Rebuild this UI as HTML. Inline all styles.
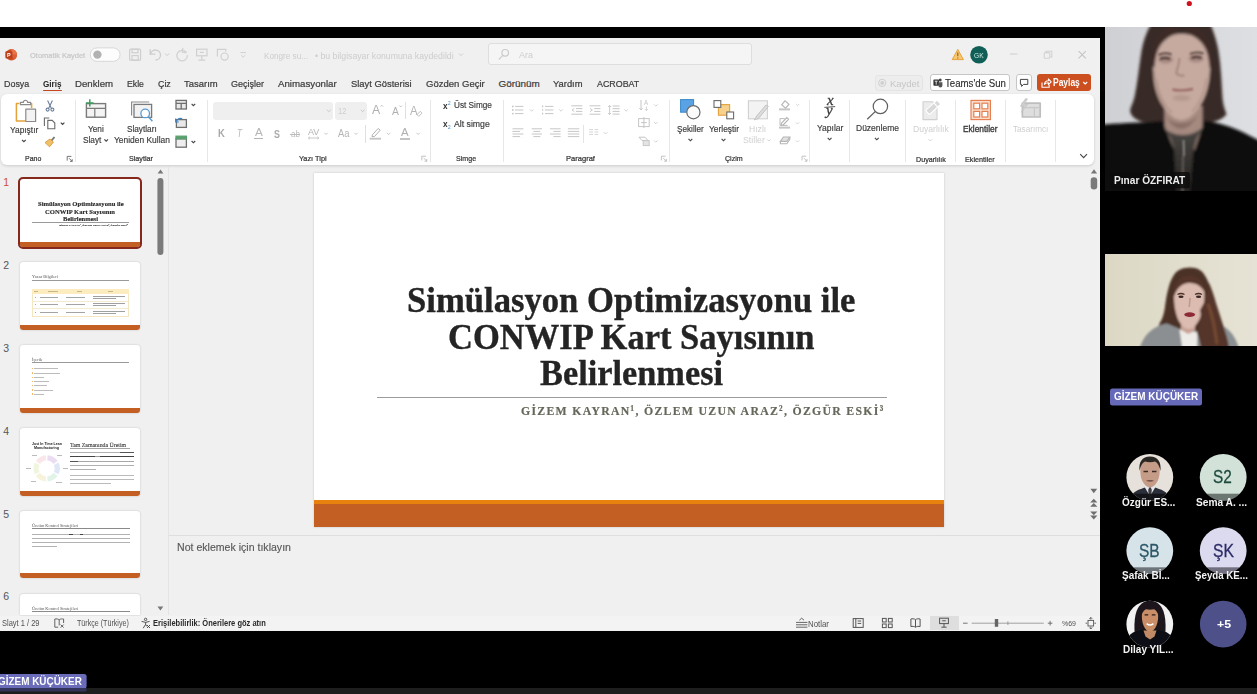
<!DOCTYPE html>
<html lang="tr"><head><meta charset="utf-8"><title>Sunum</title>
<style>
html,body{margin:0;padding:0}
body{width:1257px;height:694px;overflow:hidden;background:#000;position:relative;font-family:"Liberation Sans",sans-serif}
.t{position:absolute;white-space:nowrap;line-height:1;transform-origin:0 50%;display:block}
.b{position:absolute;box-sizing:border-box}
svg.ov{position:absolute;left:0;top:0;pointer-events:none}
</style></head><body>
<div class="b" style="left:0.00px;top:0.00px;width:1257.00px;height:27.00px;background:#fff;"></div>
<div class="b" style="left:0.00px;top:688.00px;width:1257.00px;height:6.00px;background:#1e1e1e;"></div>
<div class="b" style="left:0.00px;top:37.50px;width:1100.00px;height:593.00px;background:#f0f0f0;"></div>
<div class="b" style="left:488.30px;top:43.40px;width:263.90px;height:22.00px;background:#f5f5f5;border:1px solid #dedede;border-radius:3px;"></div>
<div class="b" style="left:42.80px;top:89.50px;width:18.80px;height:1.70px;background:#c2461f;border-radius:1px;"></div>
<div class="b" style="left:875.00px;top:74.50px;width:47.70px;height:16.70px;background:#ededed;border:1px solid #e4e4e4;border-radius:3px;"></div>
<div class="b" style="left:930.30px;top:74.30px;width:79.90px;height:17.00px;background:#fff;border:1px solid #c6c6c6;border-radius:3px;"></div>
<div class="b" style="left:1016.40px;top:74.30px;width:15.20px;height:17.00px;background:#fff;border:1px solid #c6c6c6;border-radius:3px;"></div>
<div class="b" style="left:1037.40px;top:74.30px;width:53.90px;height:17.00px;background:#cb4f1f;border-radius:3px;"></div>
<div class="b" style="left:0.50px;top:94.30px;width:1093.50px;height:70.90px;background:#fff;border-radius:6px;box-shadow:0 1px 3px rgba(0,0,0,0.16);"></div>
<div class="b" style="left:74.70px;top:99.50px;width:1.00px;height:62.50px;background:#e7e7e7;"></div>
<div class="b" style="left:206.70px;top:99.50px;width:1.00px;height:62.50px;background:#e7e7e7;"></div>
<div class="b" style="left:429.50px;top:99.50px;width:1.00px;height:62.50px;background:#e7e7e7;"></div>
<div class="b" style="left:502.90px;top:99.50px;width:1.00px;height:62.50px;background:#e7e7e7;"></div>
<div class="b" style="left:668.70px;top:99.50px;width:1.00px;height:62.50px;background:#e7e7e7;"></div>
<div class="b" style="left:808.80px;top:99.50px;width:1.00px;height:62.50px;background:#e7e7e7;"></div>
<div class="b" style="left:848.70px;top:99.50px;width:1.00px;height:62.50px;background:#e7e7e7;"></div>
<div class="b" style="left:904.90px;top:99.50px;width:1.00px;height:62.50px;background:#e7e7e7;"></div>
<div class="b" style="left:955.10px;top:99.50px;width:1.00px;height:62.50px;background:#e7e7e7;"></div>
<div class="b" style="left:1004.50px;top:99.50px;width:1.00px;height:62.50px;background:#e7e7e7;"></div>
<div class="b" style="left:1054.90px;top:99.50px;width:1.00px;height:62.50px;background:#e7e7e7;"></div>
<div class="b" style="left:213.00px;top:101.80px;width:119.70px;height:17.80px;background:#efefef;border-radius:3px;"></div>
<div class="b" style="left:334.60px;top:101.80px;width:32.40px;height:17.80px;background:#efefef;border-radius:3px;"></div>
<div class="b" style="left:405.30px;top:102.40px;width:1.00px;height:16.20px;background:#e0e0e0;"></div>
<div class="b" style="left:254.40px;top:138.40px;width:8.60px;height:1.00px;background:#b5b5b5;"></div>
<div class="b" style="left:289.70px;top:133.60px;width:10.50px;height:0.90px;background:#bcbcbc;"></div>
<div class="b" style="left:364.50px;top:125.00px;width:1.00px;height:17.50px;background:#e0e0e0;"></div>
<div class="b" style="left:399.50px;top:137.80px;width:10.50px;height:1.80px;background:#c4c4c4;"></div>
<div class="b" style="left:582.90px;top:124.50px;width:1.00px;height:18.50px;background:#e4e4e4;"></div>
<div class="b" style="left:168.00px;top:167.00px;width:1.00px;height:448.40px;background:#e4e4e4;"></div>
<div class="b" style="left:20.00px;top:179.20px;width:120.20px;height:67.40px;background:#fff;border-radius:3px;box-shadow:0 0 2px rgba(0,0,0,0.22);overflow:hidden;"></div>
<div class="b" style="left:20.00px;top:241.80px;width:120.20px;height:4.80px;background:#c45f24;border-radius:0 0 3px 3px;"></div>
<div class="b" style="left:20.00px;top:262.30px;width:120.20px;height:67.40px;background:#fff;border-radius:3px;box-shadow:0 0 2px rgba(0,0,0,0.22);overflow:hidden;"></div>
<div class="b" style="left:20.00px;top:324.90px;width:120.20px;height:4.80px;background:#c45f24;border-radius:0 0 3px 3px;"></div>
<div class="b" style="left:20.00px;top:345.40px;width:120.20px;height:67.40px;background:#fff;border-radius:3px;box-shadow:0 0 2px rgba(0,0,0,0.22);overflow:hidden;"></div>
<div class="b" style="left:20.00px;top:408.00px;width:120.20px;height:4.80px;background:#c45f24;border-radius:0 0 3px 3px;"></div>
<div class="b" style="left:20.00px;top:428.40px;width:120.20px;height:67.40px;background:#fff;border-radius:3px;box-shadow:0 0 2px rgba(0,0,0,0.22);overflow:hidden;"></div>
<div class="b" style="left:20.00px;top:491.00px;width:120.20px;height:4.80px;background:#c45f24;border-radius:0 0 3px 3px;"></div>
<div class="b" style="left:20.00px;top:510.50px;width:120.20px;height:67.40px;background:#fff;border-radius:3px;box-shadow:0 0 2px rgba(0,0,0,0.22);overflow:hidden;"></div>
<div class="b" style="left:20.00px;top:573.10px;width:120.20px;height:4.80px;background:#c45f24;border-radius:0 0 3px 3px;"></div>
<div class="b" style="left:20.00px;top:593.80px;width:120.20px;height:21.60px;background:#fff;border-radius:3px 3px 0 0;box-shadow:0 0 2px rgba(0,0,0,0.22);overflow:hidden;"></div>
<div class="b" style="left:17.60px;top:177.20px;width:124.60px;height:72.20px;border:2px solid #84291c;border-radius:5px;"></div>
<div class="b" style="left:32.40px;top:221.80px;width:96.50px;height:0.70px;background:#9a9a9a;"></div>
<div class="b" style="left:31.60px;top:279.60px;width:97.30px;height:0.70px;background:#9a9a9a;"></div>
<div class="b" style="left:31.60px;top:289.00px;width:97.30px;height:27.70px;background:#fff;border:0.6px solid #f3e6c0;"></div>
<div class="b" style="left:31.60px;top:289.00px;width:97.30px;height:4.90px;background:#fcecc0;"></div>
<div class="b" style="left:31.60px;top:300.80px;width:97.30px;height:0.50px;background:#f3ead0;"></div>
<div class="b" style="left:31.60px;top:308.40px;width:97.30px;height:0.50px;background:#f3ead0;"></div>
<div class="b" style="left:33.90px;top:291.20px;width:3.80px;height:0.70px;background:#c8b888;"></div>
<div class="b" style="left:48.30px;top:291.20px;width:9.50px;height:0.70px;background:#c8b888;"></div>
<div class="b" style="left:77.00px;top:291.20px;width:4.70px;height:0.70px;background:#c8b888;"></div>
<div class="b" style="left:108.00px;top:291.20px;width:5.40px;height:0.70px;background:#c8b888;"></div>
<div class="b" style="left:35.40px;top:296.90px;width:1.00px;height:0.60px;background:#b0b0b0;"></div>
<div class="b" style="left:39.90px;top:296.85px;width:17.90px;height:0.70px;background:#a4a4a4;"></div>
<div class="b" style="left:66.20px;top:296.85px;width:19.10px;height:0.70px;background:#a4a4a4;"></div>
<div class="b" style="left:92.50px;top:295.95px;width:32.90px;height:0.65px;background:#a0a0a0;"></div>
<div class="b" style="left:92.50px;top:297.90px;width:23.50px;height:0.65px;background:#a0a0a0;"></div>
<div class="b" style="left:35.40px;top:304.30px;width:1.00px;height:0.60px;background:#b0b0b0;"></div>
<div class="b" style="left:39.90px;top:304.25px;width:17.90px;height:0.70px;background:#a4a4a4;"></div>
<div class="b" style="left:66.20px;top:304.25px;width:19.10px;height:0.70px;background:#a4a4a4;"></div>
<div class="b" style="left:92.50px;top:303.35px;width:32.90px;height:0.65px;background:#a0a0a0;"></div>
<div class="b" style="left:92.50px;top:305.30px;width:23.50px;height:0.65px;background:#a0a0a0;"></div>
<div class="b" style="left:35.40px;top:312.10px;width:1.00px;height:0.60px;background:#b0b0b0;"></div>
<div class="b" style="left:39.90px;top:312.05px;width:17.90px;height:0.70px;background:#a4a4a4;"></div>
<div class="b" style="left:66.20px;top:312.05px;width:19.10px;height:0.70px;background:#a4a4a4;"></div>
<div class="b" style="left:92.50px;top:311.15px;width:32.90px;height:0.65px;background:#a0a0a0;"></div>
<div class="b" style="left:92.50px;top:313.10px;width:23.50px;height:0.65px;background:#a0a0a0;"></div>
<div class="b" style="left:31.90px;top:362.40px;width:97.00px;height:0.70px;background:#9a9a9a;"></div>
<div class="b" style="left:31.90px;top:367.90px;width:1.20px;height:1.40px;background:#f4b868;"></div>
<div class="b" style="left:33.60px;top:368.35px;width:24.00px;height:0.75px;background:#bcbcbc;"></div>
<div class="b" style="left:31.90px;top:372.30px;width:1.20px;height:1.40px;background:#f4b868;"></div>
<div class="b" style="left:33.60px;top:372.75px;width:26.00px;height:0.75px;background:#bcbcbc;"></div>
<div class="b" style="left:31.90px;top:376.50px;width:1.20px;height:1.40px;background:#f4b868;"></div>
<div class="b" style="left:33.60px;top:376.95px;width:10.00px;height:0.75px;background:#bcbcbc;"></div>
<div class="b" style="left:31.90px;top:380.60px;width:1.20px;height:1.40px;background:#f4b868;"></div>
<div class="b" style="left:33.60px;top:381.05px;width:15.00px;height:0.75px;background:#bcbcbc;"></div>
<div class="b" style="left:31.90px;top:385.00px;width:1.20px;height:1.40px;background:#f4b868;"></div>
<div class="b" style="left:33.60px;top:385.45px;width:13.00px;height:0.75px;background:#bcbcbc;"></div>
<div class="b" style="left:31.90px;top:389.20px;width:1.20px;height:1.40px;background:#f4b868;"></div>
<div class="b" style="left:33.60px;top:389.65px;width:19.00px;height:0.75px;background:#bcbcbc;"></div>
<div class="b" style="left:31.90px;top:393.30px;width:1.20px;height:1.40px;background:#f4b868;"></div>
<div class="b" style="left:33.60px;top:393.75px;width:10.00px;height:0.75px;background:#bcbcbc;"></div>
<div class="b" style="left:32.00px;top:455.30px;width:5.00px;height:0.60px;background:#bbb;"></div>
<div class="b" style="left:57.00px;top:455.30px;width:5.00px;height:0.60px;background:#bbb;"></div>
<div class="b" style="left:25.50px;top:467.50px;width:5.00px;height:0.60px;background:#bbb;"></div>
<div class="b" style="left:63.00px;top:468.30px;width:5.00px;height:0.60px;background:#bbb;"></div>
<div class="b" style="left:31.00px;top:481.30px;width:5.00px;height:0.60px;background:#bbb;"></div>
<div class="b" style="left:56.00px;top:482.30px;width:6.00px;height:0.60px;background:#bbb;"></div>
<div class="b" style="left:69.50px;top:448.00px;width:60.00px;height:0.60px;background:#a4a4a4;"></div>
<div class="b" style="left:69.50px;top:451.90px;width:64.50px;height:0.65px;background:#b0b0b0;"></div>
<div class="b" style="left:69.50px;top:456.30px;width:64.50px;height:0.65px;background:#999;"></div>
<div class="b" style="left:69.50px;top:460.50px;width:64.50px;height:0.65px;background:#a8a8a8;"></div>
<div class="b" style="left:69.50px;top:464.60px;width:64.50px;height:0.65px;background:#b0b0b0;"></div>
<div class="b" style="left:69.50px;top:468.70px;width:26.50px;height:0.65px;background:#b0b0b0;"></div>
<div class="b" style="left:69.50px;top:474.70px;width:64.50px;height:0.65px;background:#bbb;"></div>
<div class="b" style="left:69.50px;top:478.70px;width:64.50px;height:0.65px;background:#bbb;"></div>
<div class="b" style="left:69.50px;top:482.50px;width:41.50px;height:0.65px;background:#bbb;"></div>
<div class="b" style="left:120.00px;top:451.80px;width:14.00px;height:0.80px;background:#555;"></div>
<div class="b" style="left:69.50px;top:456.20px;width:25.50px;height:0.80px;background:#444;"></div>
<div class="b" style="left:100.00px;top:456.20px;width:34.00px;height:0.80px;background:#444;"></div>
<div class="b" style="left:69.50px;top:460.50px;width:8.50px;height:0.70px;background:#555;"></div>
<div class="b" style="left:31.70px;top:527.90px;width:98.30px;height:0.70px;background:#8a8a8a;"></div>
<div class="b" style="left:31.70px;top:533.55px;width:98.30px;height:0.75px;background:#b2b2b2;"></div>
<div class="b" style="left:31.70px;top:537.95px;width:98.30px;height:0.75px;background:#b2b2b2;"></div>
<div class="b" style="left:31.70px;top:542.25px;width:98.30px;height:0.75px;background:#b2b2b2;"></div>
<div class="b" style="left:31.70px;top:546.25px;width:25.80px;height:0.75px;background:#b2b2b2;"></div>
<div class="b" style="left:69.00px;top:533.50px;width:4.00px;height:0.80px;background:#444;"></div>
<div class="b" style="left:79.50px;top:533.50px;width:3.50px;height:0.80px;background:#444;"></div>
<div class="b" style="left:31.70px;top:610.70px;width:98.30px;height:0.70px;background:#8a8a8a;"></div>
<div class="b" style="left:314.40px;top:173.00px;width:629.40px;height:353.60px;background:#fff;box-shadow:0 0 2px rgba(0,0,0,0.18);"></div>
<div class="b" style="left:314.40px;top:499.60px;width:629.40px;height:4.20px;background:#e8820f;"></div>
<div class="b" style="left:314.40px;top:503.60px;width:629.40px;height:23.00px;background:#c45f24;"></div>
<div class="b" style="left:377.00px;top:397.00px;width:509.90px;height:1.00px;background:#9c9c9c;"></div>
<div class="b" style="left:169.00px;top:534.80px;width:931.00px;height:0.80px;background:#dedede;"></div>
<div class="b" style="left:0.00px;top:615.60px;width:1100.00px;height:14.90px;background:#f3f3f3;"></div>
<div class="b" style="left:929.60px;top:616.00px;width:29.70px;height:13.60px;background:#dedede;"></div>
<svg class="ov" width="1257" height="694" viewBox="0 0 1257 694">
<circle cx="1189.3" cy="3.5" r="2.6" fill="#d0121f"/>
<circle cx="11.3" cy="54.8" r="5.7" fill="#cf4e22"/><path d="M11.3 49.1a5.7 5.7 0 0 1 5.7 5.7h-5.7z" fill="#e8754a"/><path d="M11.3 54.8h5.7a5.700 5.700 0 0 1-2.800 4.900z" fill="#dc6036"/><rect x="5.400" y="51.200" width="7" height="7.200" rx="1" fill="#bd3f19"/>
<rect x="90.3" y="47.9" width="29.8" height="13.4" rx="6.7" fill="#fdfdfd" stroke="#d8d8d8" stroke-width="1"/><circle cx="97.4" cy="54.6" r="4.2" fill="#b2b2b2"/>
<g fill="none" stroke="#cfcfcf" stroke-width="1.2"><rect x="129.6" y="49.2" width="11" height="11" rx="1"/><rect x="132" y="49.2" width="6" height="3.6"/><rect x="132" y="55.6" width="6.2" height="4.6"/></g>
<g fill="none" stroke="#cdcdcd" stroke-width="1.3" stroke-linecap="round"><path d="M150.2 49.6v4.6h4.6"/><path d="M150.6 54a5 5 0 1 1 5.4 6"/><path d="M165.3 53.8l1.8 1.8 1.8-1.8" stroke-width="1"/></g>
<g fill="none" stroke="#d2d2d2" stroke-width="1.3" stroke-linecap="round"><path d="M186 52a5.3 5.3 0 1 0 1.4 3.6"/><path d="M182.6 48.6v3.8h3.8" transform="rotate(8 184 50)"/></g>
<g fill="none" stroke="#d0d0d0" stroke-width="1.2"><rect x="196.6" y="49.2" width="10.4" height="6.6"/><path d="M201.8 55.8v4.2M198.4 60.2h6.8M199.8 52.4h4"/></g>
<g fill="none" stroke="#d0d0d0" stroke-width="1.2"><path d="M217.4 56.6v-7.2h8.4v2"/><circle cx="224.6" cy="56.6" r="3.6"/></g>
<g fill="none" stroke="#d0d0d0" stroke-width="1"><path d="M240.4 52.6h5.6M241.2 55.2l2 2 2-2"/></g>
<path d="M459 53.6l2 2 2-2" fill="none" stroke="#cfcfcf" stroke-width="1"/>
<g fill="none" stroke="#cbcbcb" stroke-width="1.2" stroke-linecap="round"><circle cx="505.2" cy="52.8" r="3.3"/><path d="M502.8 55.4l-3.6 3.8"/></g>
<path d="M957.8 49.4l5.6 10.2h-11.2z" fill="#f7c873" stroke="#e8a33a" stroke-width="1" stroke-linejoin="round"/><path d="M957.8 52.6v3.6M957.8 57.4v1" stroke="#8a5a10" stroke-width="1.1"/>
<circle cx="979" cy="54.7" r="8.8" fill="#0f5f56"/>
<g fill="none" stroke="#d2d2d2" stroke-width="1.1"><path d="M1010 54h7.6"/><rect x="1044.2" y="52.6" width="5.6" height="5.6" rx="1"/><path d="M1046 52.4v-1.2h5.8v5.8h-1.6"/><path d="M1078.6 51.2l7.2 7.2M1085.8 51.2l-7.2 7.2" stroke="#c4c4c4"/></g>
<circle cx="882.2" cy="82.9" r="3.6" fill="none" stroke="#cfcfcf" stroke-width="1"/><circle cx="882.2" cy="82.9" r="1.9" fill="#cfcfcf"/>
<g><rect x="933.4" y="79.6" width="5.6" height="6.2" rx="0.8" fill="#333"/><circle cx="940.2" cy="80" r="1.5" fill="#444"/><path d="M938.4 82.2h4v3.2a2 2 0 0 1-4 0z" fill="#555"/><path d="M934.8 81.2h2.8M936.2 81.2v3.4" stroke="#fff" stroke-width="0.8"/></g>
<path d="M1020.4 79.4h7.4v5h-4.2l-2 2v-2h-1.2z" fill="none" stroke="#444" stroke-width="1" stroke-linejoin="round"/>
<g fill="none" stroke="#fff" stroke-width="1.1" stroke-linejoin="round"><path d="M1042 82.6v4.6h7.2v-2.4"/><path d="M1044.4 84.4c0.4-2.4 1.8-3.6 4-3.6v-1.8l2.8 2.8-2.8 2.8v-1.8c-1.6 0-2.8 0.400-4 1.600z"/><path d="M1083.2 82l2 2 2-2"/></g>
<g fill="none" stroke-linejoin="round"><path d="M19.400 103.400h-3v17.600h9" stroke="#e3a23b" stroke-width="1.500"/><path d="M28.600 103.400h3v4.600" stroke="#e3a23b" stroke-width="1.500"/><path d="M20.400 104.600v-2.200h3a2.100 2.100 0 0 1 4.200 0h3v2.200z" stroke="#8a8a8a" stroke-width="1.100" fill="#fff"/><rect x="25.800" y="109.200" width="9.800" height="12.300" stroke="#8a8a8a" stroke-width="1.200" fill="#f3f3f3"/></g>
<path d="M22 139.800l1.900 1.900 1.900-1.900" fill="none" stroke="#444" stroke-width="1.15"/>
<g fill="none" stroke="#6b7f99" stroke-width="1.1"><path d="M47.600 100.400l3.600 7.600M52.400 100.400l-3.600 7.600"/><circle cx="47.600" cy="109.600" r="1.500"/><circle cx="52.400" cy="109.600" r="1.500"/></g>
<g fill="#fff" stroke="#6a6a6a" stroke-width="1.100"><path d="M44.400 126v-8h4.800"/><path d="M47.800 120.400h4.400l2.600 2.600v5.800h-7z"/></g><path d="M60.800 122.600l1.800 1.800 1.800-1.800" fill="none" stroke="#444" stroke-width="1.15"/>
<g stroke-linejoin="round"><path d="M53.800 136.400l1.400 1.200-3.200 3.800-1.400-1.200z" fill="#777"/><path d="M45 142.600l5-3.600 3.400 3-3.800 4.800z" fill="#f1c06a" stroke="#d99a34" stroke-width="0.900"/></g>
<g fill="none" stroke="#666" stroke-width="0.900"><path d="M67.200 160.600v-4.200h4.200"/><path d="M69 158.200l3.200 3.200M72.200 159.200v2.200h-2.200"/></g>
<g fill="none"><rect x="86.400" y="103.600" width="19.200" height="13.600" stroke="#7a7a7a" stroke-width="1.400" fill="#f4f4f4"/><path d="M86.400 108.400h19.200M94.800 108.400v8.800" stroke="#7a7a7a" stroke-width="1.200"/><path d="M89.800 99.200v7.400M86 102.900h7.600" stroke="#3c9a5f" stroke-width="1.500"/></g>
<path d="M104.400 139.400l1.800 1.800 1.800-1.800" fill="none" stroke="#444" stroke-width="1.15"/>
<g fill="none"><path d="M131.600 115.400v-13.400h17.600" stroke="#8a8a8a" stroke-width="1.200"/><rect x="134" y="104.400" width="17.600" height="13" stroke="#7a7a7a" stroke-width="1.300" fill="#f2f2f2"/><circle cx="145.200" cy="113.400" r="4.300" stroke="#5a9bd0" stroke-width="1.300" fill="#fff"/><path d="M148.400 116.800l4 4.400" stroke="#5a9bd0" stroke-width="1.400"/></g>
<g fill="none" stroke="#6f6f6f" stroke-width="1.300"><rect x="176" y="100.400" width="10.400" height="8.600" fill="#e9e9e9"/><path d="M176 103.400h10.400M181.200 103.400v5.600"/></g><path d="M191.600 103.800l1.800 1.800 1.800-1.800" fill="none" stroke="#444" stroke-width="1.15"/>
<g fill="none"><rect x="176.400" y="119.600" width="10" height="7.800" stroke="#6f6f6f" stroke-width="1.300" fill="#e9e9e9"/><path d="M176.200 121.800c1-2.800 3.200-3.800 6-3.200" stroke="#3b86c8" stroke-width="1.300"/><path d="M175.600 118.600v3.400h3.200" stroke="#3b86c8" stroke-width="1.100"/></g>
<g fill="none" stroke="#6f6f6f" stroke-width="1.300"><rect x="176" y="138.800" width="10.400" height="8.400" fill="#eee"/><rect x="176" y="136.200" width="10.400" height="2.600" fill="#5aa06e" stroke="#5aa06e"/></g><path d="M191.600 141l1.800 1.800 1.800-1.800" fill="none" stroke="#444" stroke-width="1.15"/>
<path d="M327 109.800l1.900 1.900 1.900-1.900M360.800 109.800l1.900 1.900 1.900-1.900" fill="none" stroke="#c8c8c8" stroke-width="1"/>
<path d="M380.600 106.600l1.300-1.300 1.300 1.300" fill="none" stroke="#b0b0b0" stroke-width="0.800"/>
<path d="M399.400 105.600l1.300 1.300 1.300-1.300" fill="none" stroke="#b0b0b0" stroke-width="0.800"/>
<path d="M417 114.600l3.200-3.200 1.800 1.800-3.200 3.200z" fill="#fff" stroke="#b5b5b5" stroke-width="0.900"/>
<path d="M308.400 138h10.400M308.400 138l1.400-1.200M308.400 138l1.400 1.200M318.800 138l-1.400-1.200M318.800 138l-1.400 1.200" fill="none" stroke="#bdbdbd" stroke-width="0.800"/><path d="M324.400 132.800l1.700 1.700 1.700-1.700M354.400 132.800l1.700 1.700 1.700-1.700M386.900 132.800l1.700 1.700 1.700-1.700M416.500 132.800l1.700 1.700 1.700-1.700" fill="none" stroke="#c4c4c4" stroke-width="0.900"/>
<path d="M372.400 134.800l5.800-6.400 2 1.800-5.800 6.400h-2.400z" fill="none" stroke="#b0b0b0" stroke-width="1"/><rect x="369.600" y="137.800" width="11.400" height="1.800" fill="#c4c4c4"/>
<g fill="none" stroke="#bcbcbc" stroke-width="0.900"><path d="M421.800 160.400v-4.200h4.200"/><path d="M423.600 158l3.200 3.200M426.800 159v2.200h-2.200"/></g>
<g fill="none" stroke="#bcbcbc" stroke-width="0.900"><path d="M423 0"/></g>
<path d="M515.0 106.4H523.4M515.0 110.0H523.4M515.0 113.6H523.4" fill="none" stroke="#c6c6c6" stroke-width="1"/>
<g fill="#c6c6c6"><circle cx="512.800" cy="106.400" r="0.900"/><circle cx="512.800" cy="110" r="0.900"/><circle cx="512.800" cy="113.600" r="0.900"/></g>
<path d="M545.0 106.4H553.4M545.0 110.0H553.4M545.0 113.6H553.4" fill="none" stroke="#c6c6c6" stroke-width="1"/>
<path d="M542.0 106.4H543.2M542.0 110.0H543.2M542.0 113.6H543.2" fill="none" stroke="#c6c6c6" stroke-width="1.6"/>
<path d="M571.4 105.8H582.4M571.4 114.2H582.4" fill="none" stroke="#c6c6c6" stroke-width="1"/>
<path d="M576.0 108.6H582.4M576.0 111.4H582.4" fill="none" stroke="#c6c6c6" stroke-width="1"/>
<path d="M574.400 108.400l-2.400 1.600 2.400 1.600" fill="none" stroke="#c6c6c6" stroke-width="0.900"/>
<path d="M589.6 105.8H600.4M589.6 114.2H600.4" fill="none" stroke="#c6c6c6" stroke-width="1"/>
<path d="M594.2 108.6H600.4M594.2 111.4H600.4" fill="none" stroke="#c6c6c6" stroke-width="1"/>
<path d="M590 108.400l2.400 1.600-2.400 1.600" fill="none" stroke="#c6c6c6" stroke-width="0.900"/>
<path d="M612.6 106.0H619.6M612.6 108.7H619.6M612.6 111.4H619.6M612.6 114.1H619.6" fill="none" stroke="#c6c6c6" stroke-width="1"/>
<path d="M609.600 105.400v9.200M608.200 107l1.400-1.600 1.400 1.600M608.200 113l1.400 1.600 1.400-1.600" fill="none" stroke="#c6c6c6" stroke-width="0.900"/>
<path d="M529.900 109.400l1.800 1.800 1.800-1.800M559.200 109.400l1.800 1.800 1.800-1.800M624.400 109.400l1.800 1.800 1.800-1.800M654 104.400l1.800 1.800 1.800-1.800M654 122l1.800 1.800 1.800-1.800M654 140.400l1.800 1.800 1.800-1.800M603.700 132.200l1.800 1.800 1.800-1.800" fill="none" stroke="#cdcdcd" stroke-width="0.900"/>
<path d="M641 100v10M639.400 108.200l1.600 1.800 1.600-1.800" fill="none" stroke="#c6c6c6" stroke-width="1"/>
<path d="M646.400 106.400v4.200M645 109.200l1.400 1.400 1.400-1.400" fill="none" stroke="#c6c6c6" stroke-width="0.800"/>
<g fill="none" stroke="#c6c6c6" stroke-width="1"><rect x="638.600" y="118.600" width="10.600" height="8"/><path d="M643.900 117v11M641 122.600h5.800"/></g>
<g fill="none" stroke="#c6c6c6" stroke-width="1"><path d="M639 137.200h6l3 3.400h-6z"/><rect x="643.200" y="140.600" width="6" height="5" fill="#e4e4e4"/></g>
<path d="M512.5 128.8H523.4M512.5 131.4H523.4M512.5 134.0H523.4M512.5 136.6H523.4" fill="none" stroke="#c6c6c6" stroke-width="1"/>
<path d="M520 131.400H524M520 136.600H524" stroke="#fff" stroke-width="1.400"/>
<path d="M531.7 128.8H542.0M531.7 134.0H542.0" fill="none" stroke="#c6c6c6" stroke-width="1"/>
<path d="M533.4 131.4H540.3M533.4 136.6H540.3" fill="none" stroke="#c6c6c6" stroke-width="1"/>
<path d="M549.9 128.8H560.6M549.9 134.0H560.6" fill="none" stroke="#c6c6c6" stroke-width="1"/>
<path d="M553.4 131.4H560.6M553.4 136.6H560.6" fill="none" stroke="#c6c6c6" stroke-width="1"/>
<path d="M567.9 128.8H579.3M567.9 131.4H579.3M567.9 134.0H579.3M567.9 136.6H579.3" fill="none" stroke="#c6c6c6" stroke-width="1"/>
<path d="M589.2 129.6H593.0M589.2 132.0H593.0M589.2 134.4H593.0" fill="none" stroke="#d4d4d4" stroke-width="1"/>
<path d="M594.6 129.6H598.3M594.6 132.0H598.3M594.6 134.4H598.3" fill="none" stroke="#d4d4d4" stroke-width="1"/>
<g fill="none" stroke="#bcbcbc" stroke-width="0.900"><path d="M661.400 160.400v-4.200h4.200"/><path d="M663.200 158l3.200 3.200M666.400 159v2.200h-2.200"/></g>
<rect x="680.600" y="99.600" width="13" height="12.600" fill="#5aa2e6" stroke="#3b86c8" stroke-width="1"/><circle cx="693.400" cy="112.200" r="6.600" fill="#fbfbfb" stroke="#6a6a6a" stroke-width="1.200"/>
<path d="M688.500 138.900l1.900 1.900 1.900-1.900M721.600 138.900l1.900 1.900 1.900-1.900" fill="none" stroke="#444" stroke-width="1.15"/>
<g stroke-width="1.100"><rect x="718.400" y="104.600" width="11.200" height="10.600" fill="#f6d28c" stroke="#e3a23b"/><rect x="714" y="100.600" width="6.800" height="6.800" fill="#fff" stroke="#6a6a6a"/><rect x="726.800" y="112" width="6.800" height="6.800" fill="#fff" stroke="#6a6a6a"/></g>
<rect x="748.400" y="100.800" width="19" height="18" fill="#f3f3f3" stroke="#d0d0d0" stroke-width="1.100"/><path d="M768.400 106.400l-8.800 10.800c-1.400 1.600-3.600 2.400-5.400 2.600 1.200-1 1.600-2.800 2.800-4.200l9-10.600z" fill="#dcdcdc" stroke="#c2c2c2" stroke-width="1"/>
<path d="M767.200 139.400l1.700 1.700 1.700-1.700M795.800 104l1.700 1.700 1.700-1.700M795.800 122.400l1.700 1.700 1.700-1.700M795.800 140.400l1.700 1.700 1.700-1.700" fill="none" stroke="#d0d0d0" stroke-width="0.900"/>
<g fill="none" stroke="#b6b6b6" stroke-width="1.15"><path d="M781.600 104.800l3.400-4 4 3.400-3.400 4z"/><rect x="779" y="108.400" width="11" height="2" fill="#c6c6c6" stroke="none"/><path d="M781.400 123.400l5.400-5.800 1.800 1.600-5.400 5.800h-2z"/><path d="M780 118.600h4.800M780 118.600v6.800h7.600" stroke-width="0.900"/><rect x="779" y="126.600" width="11" height="2" fill="#c6c6c6" stroke="none"/><path d="M780.400 141.400l3-4.400h6.400l-3 4.400z" fill="#e2e2e2"/><path d="M780.400 141.400v2.400h6.400l3-4.400v-2.400" /></g>
<g fill="none" stroke="#bcbcbc" stroke-width="0.900"><path d="M802 160.400v-4.200h4.200"/><path d="M803.800 158l3.200 3.200M807 159v2.200h-2.200"/></g>
<path d="M824.400 107.400l10.800-0.800" stroke="#555" stroke-width="1"/>
<path d="M827.700 137.900l1.900 1.900 1.900-1.900M874.900 137.900l1.900 1.900 1.900-1.900" fill="none" stroke="#444" stroke-width="1.15"/>
<circle cx="880.400" cy="106.400" r="7.200" fill="none" stroke="#5f5f5f" stroke-width="1.200"/><path d="M875.200 111.600l-8 7.600" stroke="#5f5f5f" stroke-width="1.300"/>
<g fill="#ececec" stroke="#d0d0d0" stroke-width="1.100" stroke-linejoin="round"><path d="M923 101.800h9.600l4.400 4.400v13.400h-14z"/><g transform="rotate(-42 933 107.500)"><rect x="925.500" y="104.700" width="15.500" height="5.600" rx="1.200" fill="#d9d9d9" stroke="#fff" stroke-width="1.100"/><path d="M936.800 104.700v5.600" stroke="#fff" stroke-width="1.100"/></g></g>
<path d="M928.500 139.200l1.800 1.800 1.800-1.800" fill="none" stroke="#d0d0d0" stroke-width="0.900"/>
<g fill="#fbe9e0" stroke="#e47d4c" stroke-width="1.150"><rect x="971" y="100.400" width="19.400" height="19.200" fill="#fbdccc"/><rect x="973.800" y="103.200" width="5.800" height="5.600" fill="#fff"/><rect x="982" y="103.200" width="5.800" height="5.600" fill="#fff"/><rect x="973.800" y="111.400" width="5.800" height="5.600" fill="#fff"/><rect x="982" y="111.400" width="5.800" height="5.600" fill="#fff"/></g>
<g fill="#dedede" stroke="#bebebe" stroke-width="1.700" stroke-linejoin="round"><rect x="1022.400" y="103.200" width="17.800" height="13.800"/><path d="M1023 107.600h16.600M1034.400 107.600v9" fill="none" stroke="#c8c8c8" stroke-width="1.200"/><path d="M1025.400 98.800l-5 7.400h3.400l-2.400 6.200 6.400-8.400h-3.400l3-5.200z" fill="#cfcfcf" stroke="#c4c4c4" stroke-width="0.800"/></g>
<path d="M1080.200 154.200l3.400 3.400 3.400-3.400" fill="none" stroke="#444" stroke-width="1.100"/>
<g fill="none" stroke-width="5.2" opacity="0.42"><path d="M47.44 457.83A10.6 10.6 0 0 1 55.49 462.47" stroke="#d0b0e0"/><path d="M56.23 463.75A10.6 10.6 0 0 1 56.23 473.05" stroke="#b0c8ec"/><path d="M55.49 474.33A10.6 10.6 0 0 1 47.44 478.97" stroke="#bce4c8"/><path d="M45.96 478.97A10.6 10.6 0 0 1 37.91 474.33" stroke="#ece4a8"/><path d="M37.17 473.05A10.6 10.6 0 0 1 37.17 463.75" stroke="#dcecb0"/><path d="M37.91 462.47A10.6 10.6 0 0 1 45.96 457.83" stroke="#f4c8d0"/></g>
<path d="M157.600 173.600l2.900-4.200 2.900 4.200z" fill="#777"/><rect x="157.400" y="178" width="6" height="77" rx="3" fill="#7a7a7a"/><path d="M157.500 606.400l2.900 4.200 2.900-4.200z" fill="#777"/>
<path d="M1090.900 173.400l3.100-4.200 3.100 4.200z" fill="#777"/><rect x="1090.700" y="177.300" width="6.500" height="12.200" rx="3.200" fill="#7a7a7a"/>
<g fill="#6f6f6f"><path d="M1090.400 488.800l3.400 4.400 3.400-4.400z"/><path d="M1090.200 502.600l3.600-3.800 3.600 3.800zM1090.200 506.800l3.600-3.800 3.600 3.800z"/><path d="M1090.200 511.400l3.600 3.800 3.600-3.800zM1090.200 515.600l3.600 3.800 3.600-3.800z"/></g>
<g fill="none" stroke="#555" stroke-width="0.900"><path d="M54.800 619v8.200h3.400M59.200 619.800v5.600M59.200 619.800c-1.200-1-3-1-4.400-0.800M59.200 619.800c1.200-1 3-1 4.400-0.800v4"/><path d="M60.600 624.600l3 3M63.600 624.600l-3 3"/></g>
<g fill="none" stroke="#444" stroke-width="0.900"><circle cx="145.600" cy="619.400" r="1.200"/><path d="M141.600 621.400l4 1 4-1M145.600 622.400v2l-2.400 3.800M145.600 624.400l1.200 2"/><path d="M147 625l3 3M150 625l-3 3"/></g>
<g fill="none" stroke="#555" stroke-width="0.900"><path d="M796 622.400h11.400M796 624.800h11.400M796 627.200h11.400M799.400 620.200l2.300-2 2.300 2"/></g>
<g fill="none" stroke="#555" stroke-width="1"><rect x="853.200" y="618.600" width="10" height="8.800"/><path d="M855.800 618.600v8.800M857.600 621h3.600M857.600 623.400h3.600"/><rect x="882.400" y="618.400" width="3.800" height="3.600"/><rect x="888.400" y="618.400" width="3.800" height="3.600"/><rect x="882.400" y="624" width="3.800" height="3.600"/><rect x="888.400" y="624" width="3.800" height="3.600"/><path d="M915.500 619.600v7.600M915.500 619.600c-1.400-1-3.200-1-4.600-0.600v7.600c1.400-0.400 3.200-0.400 4.600 0.600c1.400-1 3.200-1 4.600-0.600v-7.600c-1.400-0.400-3.200-0.400-4.600 0.600"/></g>
<g fill="none" stroke="#555" stroke-width="1"><rect x="939.600" y="618.200" width="8.800" height="5.400"/><path d="M944 623.600v3.400M941.400 627.200h5.200M942.200 620.800h3.600"/></g>
<path d="M963 623.200h4.600M1047.800 623.200h4.600M1050.100 620.900v4.600" stroke="#666" stroke-width="0.900"/><path d="M971.700 623.200h72.100" stroke="#8a8a8a" stroke-width="0.800"/><rect x="994.800" y="619" width="3.400" height="7.800" fill="#666"/><path d="M1007.900 621.400v3.600" stroke="#8a8a8a" stroke-width="0.800"/>
<g fill="none" stroke="#555" stroke-width="0.900"><rect x="1088" y="620.400" width="5.600" height="5.600"/><path d="M1090.800 617.600v2M1090.800 626.800v2M1085.600 623.200h1.600M1094.400 623.200h1.600M1089.400 618.800l1.400-1.400 1.400 1.400M1089.400 627.600l1.400 1.400 1.400-1.400"/></g>
<defs>
<filter id="bl1" x="-20%" y="-20%" width="140%" height="140%"><feGaussianBlur stdDeviation="1.6"/></filter>
<filter id="bl2" x="-20%" y="-20%" width="140%" height="140%"><feGaussianBlur stdDeviation="0.9"/></filter>
<filter id="bl3" x="-20%" y="-20%" width="140%" height="140%"><feGaussianBlur stdDeviation="0.6"/></filter>
<linearGradient id="bg1" x1="0" x2="1" y1="0" y2="0"><stop offset="0" stop-color="#cfd0d4"/><stop offset="1" stop-color="#dedfe2"/></linearGradient>
<linearGradient id="sh1" x1="0" x2="0" y1="126" y2="192" gradientUnits="userSpaceOnUse"><stop offset="0" stop-color="#4a4844"/><stop offset="0.55" stop-color="#35322f"/><stop offset="1" stop-color="#24211f"/></linearGradient>
<linearGradient id="bg2" x1="0" x2="1" y1="0" y2="0"><stop offset="0" stop-color="#dcd8c4"/><stop offset="1" stop-color="#e6e3d6"/></linearGradient>
<clipPath id="cv1"><rect x="1105" y="27" width="152" height="164"/></clipPath>
<clipPath id="cv2"><rect x="1105" y="254" width="152" height="92"/></clipPath>
<clipPath id="ca1"><circle cx="1149.800" cy="477.300" r="23.400"/></clipPath>
<clipPath id="ca2"><circle cx="1223.200" cy="477.300" r="23.400"/></clipPath>
<clipPath id="ca3"><circle cx="1149.800" cy="550.700" r="23.400"/></clipPath>
<clipPath id="ca4"><circle cx="1223.200" cy="550.700" r="23.400"/></clipPath>
<clipPath id="ca5"><circle cx="1149.800" cy="624.100" r="23.400"/></clipPath>
</defs>
<g clip-path="url(#cv1)">
<rect x="1105" y="27" width="152" height="165" fill="url(#bg1)"/>
<g filter="url(#bl1)">
<path d="M1151 24c-5 9-8 18-9.500 27-2.500 16-4 32-7 46-1.500 6-4 10-4.500 13.500 0.500 5 5 9.500 13 11.500l30 4 36-3.500c8-1 14.500-3.500 17.500-8.500-2-5-3.500-10-4-16-1-16-1.500-32-4-47-1.500-9-4.500-18-8-27z" fill="#36272300"/>
<path d="M1151 24c-5 9-8 18-9.500 27-2.500 16-4 32-7 46-1.500 6-4 10-4.500 13.500 0.500 5 5 9.500 13 11.500l30 4 36-3.500c8-1 14.500-3.500 17.500-8.500-2-5-3.500-10-4-16-1-16-1.500-32-4-47-1.500-9-4.500-18-8-27z" fill="#392925"/>
<path d="M1090 125.500c18-2 44-2.500 60-3.500l14-1 18 12 22-12c14 1 24 5 34 9 10 4.500 18 9 30 15v65h-178z" fill="#0f0f11"/>
<path d="M1164.500 106h38v20l-8 24h-20l-10-24z" fill="#a58a80"/>
<path d="M1161 126c5 4 10 10 13 22l3 56h12l4-50c2-14 6-22 12-28-8 6-14 9-22 9s-15-3-22-9z" fill="url(#sh1)"/>
<path d="M1166 116c4 8 9 13 15 13s12-5 17-14c-4 5-10 8-16.500 8s-11.500-2-15.500-7z" fill="#8a7068"/>
<path d="M1153.500 60c0-16 10-26 28-26s28 10 28.500 26c0.500 12-1 24-4 33-4 12-14 27-24.500 27s-20.500-15-24.500-27c-3-9-4-21-4-33z" fill="#c6aaa0"/>
<path d="M1152 64c0-18 6-32 18-36l12 4c-10 2-20 8-24 18-2.500 6-3 12-3.500 18z" fill="#3d2c27"/>
<path d="M1212 64c0-18-6-32-18-36l-12 4c10 2 20 8 24 18 2.500 6 3 12 3.500 18z" fill="#3d2c27"/>
</g>
<g filter="url(#bl1)" opacity="0.55"><ellipse cx="1165.500" cy="59.500" rx="7.500" ry="4" fill="#8a6e66"/><ellipse cx="1196" cy="58.500" rx="7.500" ry="4" fill="#8a6e66"/><ellipse cx="1181.500" cy="98" rx="9" ry="3" fill="#a88c82"/><path d="M1154 70c1 14 5 28 12 38l-4-2c-6-10-9-22-8-36z" fill="#8a6e66"/></g>
<g filter="url(#bl2)">
<path d="M1158.500 55c4-2 9-2 13-0.500M1190 54c4.500-2 9-2 13.500-0.500" stroke="#5a4640" stroke-width="2" fill="none"/>
<path d="M1160 59c3-1.200 7-1.200 10 0M1191.500 58c3-1.200 7-1.200 10 0" stroke="#4a3630" stroke-width="2.200" fill="none"/>
<path d="M1179.500 58c-0.500 7-2.500 11-3 14s3.500 4 8 3.500" stroke="#a8887e" stroke-width="2.200" fill="none"/>
<path d="M1172.500 89.500c5 1 14 1 20.500-0.500" stroke="#9a6a68" stroke-width="2.400" fill="none"/>
<path d="M1156 80c2 14 8 26 16 33M1207 78c-2 14-8 27-15 34" stroke="#b0948a" stroke-width="3" fill="none" opacity="0.6"/>
<path d="M1183.500 140l0.500 16" stroke="#a4a4a2" stroke-width="1.400"/><path d="M1183 156l-0.500 40" stroke="#5a5654" stroke-width="2.400"/>
</g>
</g>
<rect x="1110.300" y="172" width="79.600" height="16.300" rx="2.500" fill="#0b0b0b" opacity="0.8"/>
<g clip-path="url(#cv2)">
<rect x="1105" y="254" width="152" height="92" fill="url(#bg2)"/>
<g filter="url(#bl2)">
<path d="M1190 267.500c-8 0-14 3-17 9-4 7-5 14-6.500 20-1.500 8-1.500 14-4 21-1.500 4-3.500 6-4 9 1 4 6 6 12 7l22-4 16 18h16c-1-6-2-12-4-18-2-8-3-16-6-25-2.500-9-4-20-9-28-3-6-8-9-15.500-9z" fill="#4c3026"/>
<path d="M1138 356c2-14 8-22 15-27 5-3 9-5 14-5.500l14 6 18 2 16-8c6 1 10 3 15 8 5 5 9 14 11 24.500z" fill="#8b8f91"/>
<path d="M1179.500 329.500l18 3-1 24h-13z" fill="#eeece8"/>
<path d="M1181 322h14v9l-7 3-7-4z" fill="#c7a296"/>
<path d="M1174 296c0-12 5-18 15-18s15.500 6 15.500 17c0 8-1.500 16-4.500 23-3 6-6 11-11 11s-9-5-11.500-11c-2.500-7-3.500-14-3.500-22z" fill="#dcbcb0"/>
<path d="M1173 300c-0.500-14 5-24 16-24.500 9 0 15 6 16.500 18-4-7-9-11-17-10.500-8 0.500-13 7-15.500 17z" fill="#55362a"/>
<path d="M1200 310c2 8 0 17-3 23 2 4 3 9 4 15h28c-1-8-3-14-5-20-3-9-5-16-8-25-2-7-4-14-7-20 0 9-3 17-9 27z" fill="#55362a"/>
<path d="M1208 304c4 10 7 24 9 40" stroke="#8a5636" stroke-width="3" fill="none" opacity="0.6"/>
</g>
<g filter="url(#bl3)">
<path d="M1177.500 294.500c2-1.200 5-1.200 7 0M1195 294.500c2-1.200 5-1.200 7 0" stroke="#4a332c" stroke-width="1.400" fill="none"/>
<ellipse cx="1181" cy="296.800" rx="2.600" ry="1.300" fill="#3a2824"/><ellipse cx="1198.600" cy="296.800" rx="2.600" ry="1.300" fill="#3a2824"/>
<path d="M1190 298c0 4-1 7-0.500 9" stroke="#c09a8e" stroke-width="1.600" fill="none"/>
<ellipse cx="1189.700" cy="314.600" rx="5.400" ry="2.300" fill="#8e2a34"/>
</g>
</g>
<rect x="1110" y="388.600" width="92" height="16.900" rx="2.500" fill="#6668b8"/>
<rect x="-4" y="673.900" width="90.600" height="14.600" rx="2.500" fill="#6a6cba"/><rect x="-4" y="688" width="90.600" height="3.400" rx="1.500" fill="#34345a"/>
<g clip-path="url(#ca1)"><rect x="1125" y="452" width="50" height="52" fill="#e7e1db"/>
<g filter="url(#bl3)">
<path d="M1129 503c1-8 5-12 12-14l5-2 4 4 4-4 5 2c7 2 11 6 12 14z" fill="#2b2f38"/>
<path d="M1144.500 487l5.500 9 5.500-9-5.500-4z" fill="#e4e6ee"/>
<path d="M1149 490l1 10 1-10-1-2z" fill="#444" stroke="#3a3a40" stroke-width="1.600"/>
<path d="M1140.300 470c0-9 4-13 9.700-13s9.700 4 9.700 13c0 7-1.500 11-4 14-1.800 2.200-3.600 3.400-5.700 3.400s-3.900-1.200-5.700-3.400c-2.500-3-4-7-4-14z" fill="#c49c88"/>
<path d="M1139.600 471c-1.200-9 2.600-14.600 10.400-14.600s11.600 5.600 10.400 14.600c-1.200-6-3.400-8.400-5.400-9.400-3 0.800-7 0.800-10 0-2 1-4.200 3.400-5.400 9.400z" fill="#2b2624"/>
<path d="M1143.500 471.500h4.500M1152 471.500h4.500" stroke="#3a2c28" stroke-width="1.500"/>
<path d="M1146.500 480.600c2 0.800 5 0.800 7 0" stroke="#8a5a50" stroke-width="1"/>
</g>
<rect x="1125" y="493.700" width="50" height="10" fill="#000" opacity="0.550"/></g>
<g clip-path="url(#ca2)"><rect x="1198" y="452" width="50" height="52" fill="#d2e2d9"/><rect x="1198" y="493.700" width="50" height="10" fill="#1c2420" opacity="0.560"/></g>
<g clip-path="url(#ca3)"><rect x="1125" y="526" width="50" height="52" fill="#d6e4ea"/><rect x="1125" y="567.300" width="50" height="10" fill="#1c2024" opacity="0.560"/></g>
<g clip-path="url(#ca4)"><rect x="1198" y="526" width="50" height="52" fill="#dcdaee"/><rect x="1198" y="567.300" width="50" height="10" fill="#1e1c28" opacity="0.560"/></g>
<g clip-path="url(#ca5)"><rect x="1125" y="599" width="50" height="52" fill="#f2f2f2"/>
<g filter="url(#bl3)">
<path d="M1136.500 644c-3-12-3-28 1.500-36 3-5 7-7.500 12-7.500s9 2.500 12 7.500c4.500 8 4.500 24 1.500 36z" fill="#1c191b"/>
<path d="M1124 650c1-12 6-18 16-20l10-1 10 1c10 2 15 8 16 20z" fill="#111113"/>
<path d="M1143.500 630.500h13l-2 6-4.500 3-4.500-3z" fill="#c08a66"/>
<path d="M1141.800 616c0-6.500 3.200-10.500 8.200-10.500s8.200 4 8.200 10.500c0 5-1.200 9-3 12-1.500 2.400-3.200 3.600-5.200 3.600s-3.700-1.200-5.200-3.600c-1.800-3-3-7-3-12z" fill="#c98e68"/>
<path d="M1140.500 619c-1-9 2.500-15 9.500-15s10.500 6 9.500 15c-1-5.500-3-8.500-5.500-9.800-2.600 0.600-5.400 0.600-8 0-2.500 1.300-4.500 4.300-5.500 9.800z" fill="#1c191b"/>
<path d="M1146.600 623.600c2 1.600 4.800 1.600 6.800 0" stroke="#fff" stroke-width="1.500" fill="none"/>
<path d="M1144.600 614.800h3.600M1151.800 614.800h3.600" stroke="#2a1c18" stroke-width="1.200"/>
</g></g>
<circle cx="1223.200" cy="624.100" r="23.300" fill="#4e5189"/>
</svg>
<span class="t" style="left:7.10px;top:51.81px;font-size:6.20px;color:#fff;font-weight:700;transform:scaleX(0.8705);">P</span>
<span class="t" style="left:29.60px;top:52.13px;font-size:8.00px;color:#c6c6c6;transform:scaleX(0.9334);-webkit-text-stroke:0.20px #c6c6c6;">Otomatik Kaydet</span>
<span class="t" style="left:264.00px;top:51.70px;font-size:8.60px;color:#cdcdcd;transform:scaleX(0.9488);">Kongre su...</span>
<span class="t" style="left:315.00px;top:51.70px;font-size:8.60px;color:#cdcdcd;transform:scaleX(1.0133);">• bu bilgisayar konumuna kaydedildi</span>
<span class="t" style="left:518.90px;top:50.69px;font-size:8.80px;color:#cfcfcf;transform:scaleX(1.0296);">Ara</span>
<span class="t" style="left:974.20px;top:51.77px;font-size:7.20px;color:#cfe6e2;transform:scaleX(0.9228);">GK</span>
<span class="t" style="left:3.70px;top:78.79px;font-size:9.90px;color:#3b3b3b;transform:scaleX(0.9016);-webkit-text-stroke:0.22px #3b3b3b;">Dosya</span>
<span class="t" style="left:74.90px;top:78.79px;font-size:9.90px;color:#3b3b3b;transform:scaleX(0.9779);-webkit-text-stroke:0.22px #3b3b3b;">Denklem</span>
<span class="t" style="left:127.20px;top:78.79px;font-size:9.90px;color:#3b3b3b;transform:scaleX(0.8827);-webkit-text-stroke:0.22px #3b3b3b;">Ekle</span>
<span class="t" style="left:158.20px;top:78.79px;font-size:9.90px;color:#3b3b3b;transform:scaleX(0.8951);-webkit-text-stroke:0.22px #3b3b3b;">Çiz</span>
<span class="t" style="left:184.00px;top:78.79px;font-size:9.90px;color:#3b3b3b;transform:scaleX(0.9600);-webkit-text-stroke:0.22px #3b3b3b;">Tasarım</span>
<span class="t" style="left:231.00px;top:78.79px;font-size:9.90px;color:#3b3b3b;transform:scaleX(0.9144);-webkit-text-stroke:0.22px #3b3b3b;">Geçişler</span>
<span class="t" style="left:278.00px;top:78.79px;font-size:9.90px;color:#3b3b3b;transform:scaleX(0.9820);-webkit-text-stroke:0.22px #3b3b3b;">Animasyonlar</span>
<span class="t" style="left:351.30px;top:78.79px;font-size:9.90px;color:#3b3b3b;transform:scaleX(0.9511);-webkit-text-stroke:0.22px #3b3b3b;">Slayt Gösterisi</span>
<span class="t" style="left:425.80px;top:78.79px;font-size:9.90px;color:#3b3b3b;transform:scaleX(0.9643);-webkit-text-stroke:0.22px #3b3b3b;">Gözden Geçir</span>
<span class="t" style="left:498.60px;top:78.79px;font-size:9.90px;color:#3b3b3b;-webkit-text-stroke:0.22px #3b3b3b;">Görünüm</span>
<span class="t" style="left:553.40px;top:78.79px;font-size:9.90px;color:#3b3b3b;transform:scaleX(0.9495);-webkit-text-stroke:0.22px #3b3b3b;">Yardım</span>
<span class="t" style="left:597.30px;top:78.79px;font-size:9.90px;color:#3b3b3b;transform:scaleX(0.8998);-webkit-text-stroke:0.22px #3b3b3b;">ACROBAT</span>
<span class="t" style="left:42.80px;top:78.79px;font-size:9.90px;color:#262626;font-weight:700;transform:scaleX(0.8245);">Giriş</span>
<span class="t" style="left:889.60px;top:78.55px;font-size:9.60px;color:#c6c6c6;transform:scaleX(0.9837);">Kaydet</span>
<span class="t" style="left:945.00px;top:77.91px;font-size:10.60px;color:#2e2e2e;transform:scaleX(0.9111);-webkit-text-stroke:0.15px #2e2e2e;">Teams'de Sun</span>
<span class="t" style="left:1053.00px;top:78.07px;font-size:10.30px;color:#fff;font-weight:700;transform:scaleX(0.8209);">Paylaş</span>
<span class="t" style="left:9.70px;top:125.87px;font-size:9.20px;color:#3c3c3c;transform:scaleX(0.9123);-webkit-text-stroke:0.18px #3c3c3c;">Yapıştır</span>
<span class="t" style="left:24.70px;top:155.39px;font-size:7.70px;color:#333;transform:scaleX(0.9064);-webkit-text-stroke:0.22px #333;">Pano</span>
<span class="t" style="left:88.20px;top:125.17px;font-size:9.20px;color:#3c3c3c;transform:scaleX(0.8993);-webkit-text-stroke:0.18px #3c3c3c;">Yeni</span>
<span class="t" style="left:83.00px;top:135.87px;font-size:9.20px;color:#3c3c3c;transform:scaleX(0.8996);-webkit-text-stroke:0.18px #3c3c3c;">Slayt</span>
<span class="t" style="left:127.00px;top:125.17px;font-size:9.20px;color:#3c3c3c;transform:scaleX(0.8937);-webkit-text-stroke:0.18px #3c3c3c;">Slaytları</span>
<span class="t" style="left:113.60px;top:135.87px;font-size:9.20px;color:#3c3c3c;transform:scaleX(0.9173);-webkit-text-stroke:0.18px #3c3c3c;">Yeniden Kullan</span>
<span class="t" style="left:129.00px;top:155.39px;font-size:7.70px;color:#333;transform:scaleX(0.9308);-webkit-text-stroke:0.22px #333;">Slaytlar</span>
<span class="t" style="left:337.50px;top:106.89px;font-size:8.80px;color:#cfcfcf;transform:scaleX(0.8684);">12</span>
<span class="t" style="left:371.80px;top:104.47px;font-size:12.50px;color:#b0b0b0;transform:scaleX(0.9835);">A</span>
<span class="t" style="left:391.90px;top:106.16px;font-size:10.50px;color:#b0b0b0;transform:scaleX(0.9852);">A</span>
<span class="t" style="left:410.00px;top:104.74px;font-size:12.00px;color:#b5b5b5;transform:scaleX(0.9495);">A</span>
<span class="t" style="left:218.00px;top:128.94px;font-size:10.00px;color:#a9a9a9;font-weight:700;transform:scaleX(0.9416);">K</span>
<span class="t" style="left:237.00px;top:128.94px;font-size:10.00px;color:#b5b5b5;font-family:'Liberation Sans',sans-serif;font-style:italic;transform:scaleX(0.8185);">T</span>
<span class="t" style="left:254.80px;top:128.44px;font-size:10.00px;color:#b5b5b5;transform:scaleX(1.1694);">A</span>
<span class="t" style="left:273.50px;top:128.66px;font-size:10.50px;color:#ababab;font-weight:700;transform:scaleX(0.8424);">S</span>
<span class="t" style="left:290.50px;top:130.25px;font-size:8.50px;color:#bcbcbc;transform:scaleX(0.9413);">ab</span>
<span class="t" style="left:307.90px;top:128.38px;font-size:9.00px;color:#b5b5b5;transform:scaleX(1.0054);">AV</span>
<span class="t" style="left:338.40px;top:129.03px;font-size:10.00px;color:#b5b5b5;transform:scaleX(0.9402);">Aa</span>
<span class="t" style="left:401.00px;top:128.24px;font-size:10.00px;color:#b0b0b0;transform:scaleX(1.1394);">A</span>
<span class="t" style="left:298.70px;top:154.99px;font-size:7.70px;color:#333;transform:scaleX(0.9565);-webkit-text-stroke:0.22px #333;">Yazı Tipi</span>
<span class="t" style="left:442.60px;top:102.09px;font-size:8.80px;color:#333;font-weight:700;transform:scaleX(0.9399);">x</span>
<span class="t" style="left:447.80px;top:100.77px;font-size:5.00px;color:#3b86c8;transform:scaleX(0.9350);">2</span>
<span class="t" style="left:453.50px;top:101.37px;font-size:9.20px;color:#3c3c3c;transform:scaleX(0.8931);-webkit-text-stroke:0.18px #3c3c3c;">Üst Simge</span>
<span class="t" style="left:442.60px;top:119.69px;font-size:8.80px;color:#333;font-weight:700;transform:scaleX(0.9399);">x</span>
<span class="t" style="left:447.80px;top:125.37px;font-size:5.00px;color:#3b86c8;transform:scaleX(0.9350);">2</span>
<span class="t" style="left:453.50px;top:119.57px;font-size:9.20px;color:#3c3c3c;transform:scaleX(0.9462);-webkit-text-stroke:0.18px #3c3c3c;">Alt simge</span>
<span class="t" style="left:456.20px;top:155.49px;font-size:7.70px;color:#333;transform:scaleX(0.9209);-webkit-text-stroke:0.22px #333;">Simge</span>
<span class="t" style="left:644.40px;top:99.95px;font-size:6.50px;color:#c6c6c6;transform:scaleX(0.9456);">A</span>
<span class="t" style="left:565.80px;top:155.19px;font-size:7.70px;color:#333;transform:scaleX(0.9819);-webkit-text-stroke:0.22px #333;">Paragraf</span>
<span class="t" style="left:677.00px;top:124.77px;font-size:9.20px;color:#3c3c3c;transform:scaleX(0.8884);-webkit-text-stroke:0.18px #3c3c3c;">Şekiller</span>
<span class="t" style="left:708.60px;top:124.77px;font-size:9.20px;color:#3c3c3c;transform:scaleX(0.9119);-webkit-text-stroke:0.18px #3c3c3c;">Yerleştir</span>
<span class="t" style="left:749.30px;top:125.07px;font-size:9.20px;color:#d0d0d0;transform:scaleX(0.9348);">Hızlı</span>
<span class="t" style="left:742.70px;top:136.17px;font-size:9.20px;color:#d0d0d0;transform:scaleX(0.9519);">Stiller</span>
<span class="t" style="left:725.00px;top:154.99px;font-size:7.70px;color:#333;transform:scaleX(0.9196);-webkit-text-stroke:0.22px #333;">Çizim</span>
<span class="t" style="left:826.60px;top:92.84px;font-size:15.00px;color:#3c3c3c;font-family:'Liberation Serif',serif;transform:scaleX(0.9867);-webkit-text-stroke:0.30px #3c3c3c;font-style:italic;">x</span>
<span class="t" style="left:825.60px;top:102.74px;font-size:15.00px;color:#3c3c3c;font-family:'Liberation Serif',serif;transform:scaleX(0.9867);-webkit-text-stroke:0.30px #3c3c3c;font-style:italic;">y</span>
<span class="t" style="left:816.60px;top:123.67px;font-size:9.20px;color:#3c3c3c;transform:scaleX(0.9273);-webkit-text-stroke:0.18px #3c3c3c;">Yapılar</span>
<span class="t" style="left:855.90px;top:123.67px;font-size:9.20px;color:#3c3c3c;transform:scaleX(0.9240);-webkit-text-stroke:0.18px #3c3c3c;">Düzenleme</span>
<span class="t" style="left:912.80px;top:124.77px;font-size:9.20px;color:#cfcfcf;transform:scaleX(0.9337);">Duyarlılık</span>
<span class="t" style="left:915.90px;top:155.59px;font-size:7.70px;color:#333;transform:scaleX(0.9286);-webkit-text-stroke:0.22px #333;">Duyarlılık</span>
<span class="t" style="left:963.00px;top:123.86px;font-size:9.40px;color:#333;transform:scaleX(0.8949);-webkit-text-stroke:0.32px #333;">Eklentiler</span>
<span class="t" style="left:965.00px;top:155.59px;font-size:7.70px;color:#333;transform:scaleX(0.9378);-webkit-text-stroke:0.22px #333;">Eklentiler</span>
<span class="t" style="left:1013.00px;top:124.77px;font-size:9.20px;color:#cfcfcf;transform:scaleX(0.8878);">Tasarımcı</span>
<span class="t" style="left:3.20px;top:176.96px;font-size:10.50px;color:#c8502a;">1</span>
<span class="t" style="left:3.20px;top:259.96px;font-size:10.50px;color:#555;">2</span>
<span class="t" style="left:3.20px;top:342.76px;font-size:10.50px;color:#555;">3</span>
<span class="t" style="left:3.20px;top:425.56px;font-size:10.50px;color:#555;">4</span>
<span class="t" style="left:3.20px;top:508.56px;font-size:10.50px;color:#555;">5</span>
<span class="t" style="left:3.20px;top:591.36px;font-size:10.50px;color:#555;">6</span>
<span class="t" style="left:37.60px;top:200.94px;font-size:6.80px;color:#2a2a2a;font-weight:700;font-family:'Liberation Serif',serif;transform:scaleX(0.9723);-webkit-text-stroke:0.15px #2a2a2a;">Simülasyon Optimizasyonu ile</span>
<span class="t" style="left:45.40px;top:208.55px;font-size:6.80px;color:#2a2a2a;font-weight:700;font-family:'Liberation Serif',serif;transform:scaleX(0.9700);-webkit-text-stroke:0.15px #2a2a2a;">CONWIP Kart Sayısının</span>
<span class="t" style="left:62.80px;top:215.84px;font-size:6.80px;color:#2a2a2a;font-weight:700;font-family:'Liberation Serif',serif;transform:scaleX(0.9653);-webkit-text-stroke:0.15px #2a2a2a;">Belirlenmesi</span>
<span class="t" style="left:59.00px;top:224.34px;font-size:2.90px;color:#444;font-weight:700;font-family:'Liberation Serif',serif;transform:scaleX(0.9192);-webkit-text-stroke:0.12px #444;">GİZEM KAYRAN¹, ÖZLEM UZUN ARAZ², ÖZGÜR ESKİ³</span>
<span class="t" style="left:31.60px;top:275.03px;font-size:4.40px;color:#555;font-family:'Liberation Serif',serif;transform:scaleX(1.0067);">Yazar Bilgileri</span>
<span class="t" style="left:31.90px;top:357.53px;font-size:4.40px;color:#555;font-family:'Liberation Serif',serif;transform:scaleX(0.9845);">İçerik</span>
<span class="t" style="left:31.60px;top:442.60px;font-size:3.30px;color:#222;font-weight:700;transform:scaleX(1.0750);">Just In Time Lean</span>
<span class="t" style="left:34.00px;top:447.00px;font-size:3.30px;color:#222;font-weight:700;transform:scaleX(1.0997);">Manufacturing</span>
<span class="t" style="left:69.80px;top:442.11px;font-size:6.30px;color:#3a3a3a;font-family:'Liberation Serif',serif;transform:scaleX(0.9299);-webkit-text-stroke:0.12px #3a3a3a;">Tam Zamanında Üretim</span>
<span class="t" style="left:31.70px;top:523.84px;font-size:4.40px;color:#555;font-family:'Liberation Serif',serif;transform:scaleX(0.9868);">Üretim Kontrol Stratejileri</span>
<span class="t" style="left:31.70px;top:606.54px;font-size:4.40px;color:#555;font-family:'Liberation Serif',serif;transform:scaleX(0.9868);">Üretim Kontrol Stratejileri</span>
<span class="t" style="left:406.80px;top:282.48px;font-size:36.20px;color:#242424;font-weight:700;font-family:'Liberation Serif',serif;transform:scaleX(0.9572);-webkit-text-stroke:0.35px #242424;">Simülasyon Optimizasyonu ile</span>
<span class="t" style="left:447.80px;top:319.38px;font-size:36.20px;color:#242424;font-weight:700;font-family:'Liberation Serif',serif;transform:scaleX(0.9542);-webkit-text-stroke:0.35px #242424;">CONWIP Kart Sayısının</span>
<span class="t" style="left:539.60px;top:355.38px;font-size:36.20px;color:#242424;font-weight:700;font-family:'Liberation Serif',serif;transform:scaleX(0.9486);-webkit-text-stroke:0.35px #242424;">Belirlenmesi</span>
<span class="t" style="left:521.30px;top:404.28px;font-size:13.40px;color:#66665a;font-weight:700;font-family:'Liberation Serif',serif;letter-spacing:1.50px;transform:scaleX(0.8767);-webkit-text-stroke:0.20px #66665a;">GİZEM KAYRAN¹, ÖZLEM UZUN ARAZ², ÖZGÜR ESKİ³</span>
<span class="t" style="left:177.00px;top:542.20px;font-size:10.80px;color:#585858;transform:scaleX(0.9790);-webkit-text-stroke:0.15px #585858;">Not eklemek için tıklayın</span>
<span class="t" style="left:2.40px;top:619.31px;font-size:8.40px;color:#505050;transform:scaleX(0.8947);">Slayt 1 / 29</span>
<span class="t" style="left:76.70px;top:619.31px;font-size:8.40px;color:#505050;transform:scaleX(0.8505);">Türkçe (Türkiye)</span>
<span class="t" style="left:153.40px;top:619.31px;font-size:8.40px;color:#2a2a2a;font-weight:700;transform:scaleX(0.8974);">Erişilebilirlik: Önerilere göz atın</span>
<span class="t" style="left:808.40px;top:619.51px;font-size:8.40px;color:#505050;transform:scaleX(0.9372);">Notlar</span>
<span class="t" style="left:1062.20px;top:620.27px;font-size:7.00px;color:#505050;transform:scaleX(0.9921);">%69</span>
<span class="t" style="left:1113.90px;top:175.01px;font-size:10.60px;color:#fff;font-weight:700;transform:scaleX(0.9558);opacity:0.93;">Pınar ÖZFIRAT</span>
<span class="t" style="left:1113.90px;top:392.22px;font-size:10.40px;color:#fff;font-weight:700;transform:scaleX(0.9587);">GİZEM KÜÇÜKER</span>
<span class="t" style="left:-2.40px;top:677.02px;font-size:10.40px;color:#fff;font-weight:700;transform:scaleX(0.9553);">GİZEM KÜÇÜKER</span>
<span class="t" style="left:1213.20px;top:468.26px;font-size:18.60px;color:#1d4a3c;transform:scaleX(0.8263);-webkit-text-stroke:0.30px #1d4a3c;">S2</span>
<span class="t" style="left:1139.30px;top:541.66px;font-size:18.60px;color:#2a5666;transform:scaleX(0.8342);-webkit-text-stroke:0.30px #2a5666;">ŞB</span>
<span class="t" style="left:1212.70px;top:541.66px;font-size:18.60px;color:#2b2a66;transform:scaleX(0.8423);-webkit-text-stroke:0.30px #2b2a66;">ŞK</span>
<span class="t" style="left:1216.70px;top:619.37px;font-size:11.50px;color:#fff;font-weight:700;transform:scaleX(1.0754);">+5</span>
<span class="t" style="left:1121.90px;top:496.51px;font-size:10.50px;color:#f4f4f4;font-weight:700;transform:scaleX(0.9535);">Özgür ES...</span>
<span class="t" style="left:1195.60px;top:496.51px;font-size:10.50px;color:#f4f4f4;font-weight:700;transform:scaleX(0.9694);">Sema A. ...</span>
<span class="t" style="left:1122.00px;top:570.11px;font-size:10.50px;color:#f4f4f4;font-weight:700;transform:scaleX(0.9524);">Şafak Bİ...</span>
<span class="t" style="left:1195.40px;top:570.11px;font-size:10.50px;color:#f4f4f4;font-weight:700;transform:scaleX(0.9250);">Şeyda KE...</span>
<span class="t" style="left:1122.70px;top:643.81px;font-size:10.50px;color:#f4f4f4;font-weight:700;transform:scaleX(0.9544);">Dilay YIL...</span>
</body></html>
